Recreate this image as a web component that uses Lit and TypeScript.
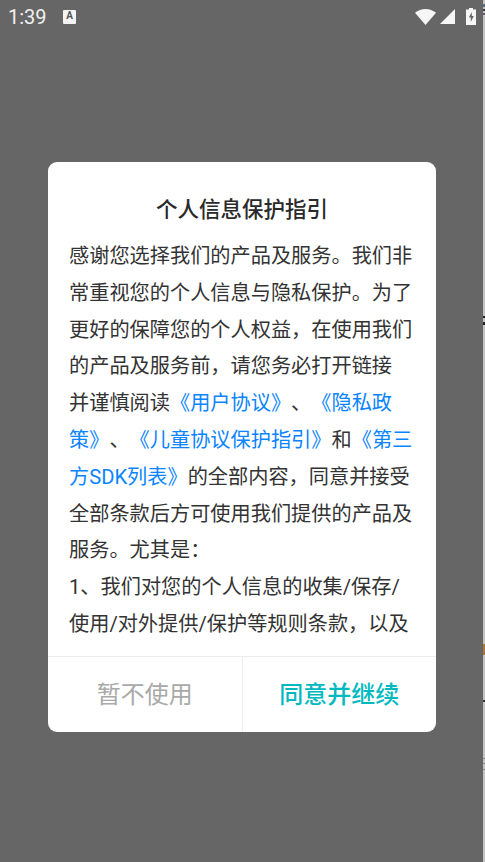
import { LitElement, html, css } from "lit";
import { customElement } from "lit/decorators.js";

const MARKS = [
  { top: 4, h: 3, c: "#5a6a80" },
  { top: 9, h: 2, c: "#3a3a3a" },
  { top: 13, h: 2, c: "#6a5a70" },
  { top: 316, h: 2, c: "#222222" },
  { top: 322, h: 3, c: "#222222" },
  { top: 644, h: 11, c: "#a87838" },
  { top: 700, h: 2, c: "#333333" },
  { top: 758, h: 1, c: "#8a8a8a" },
  { top: 763, h: 1, c: "#8a8a8a" },
  { top: 769, h: 1, c: "#8a8a8a" },
];

@customElement("app-root")
export class AppRoot extends LitElement {
  static styles = css`
    :host { display: block; width: 485px; height: 862px; background: #666666; font-family: "Roboto", "Noto Sans CJK SC", sans-serif; overflow: hidden; position: relative; text-spacing-trim: space-all; }
    .status { height: 33px; display: flex; align-items: center; padding: 0 9px 0 8px; color: #f0f0f0; font-size: 20px; }
    .time { width: 44px; }
    .a { width: 13px; height: 14px; margin-left: 11px; background: #f4f4f4; color: #555; font-size: 10px; font-weight: 700; display: flex; justify-content: center; line-height: 12px; border-radius: 1px; }
    .right { margin-left: auto; display: flex; align-items: center; gap: 4px; }
    .right svg { display: block; }
    .batt { margin-left: 7px; }
    .main { display: flex; padding: 129px 0 0 48px; }
    .dialog { width: 388px; height: 570px; background: #fff; border-radius: 9px; display: flex; flex-direction: column; overflow: hidden; }
    h1 { margin: 0; padding-top: 33px; height: 30px; text-align: center; font: 500 21.5px/30px "Roboto", "Noto Sans CJK SC", sans-serif; color: #2a2a2a; }
    .body { flex: 1; padding: 13px 21px 0 21px; font: 400 20.2px/36.8px "Roboto", "Noto Sans CJK SC", sans-serif; color: #333; overflow: hidden; white-space: nowrap; }
    a { color: #0a84ff; text-decoration: none; }
    .actions { height: 75px; border-top: 1px solid #ececec; display: flex; font: 400 24px/77px "Roboto", "Noto Sans CJK SC", sans-serif; }
    .actions div { flex: 1; text-align: center; }
    .no { color: #a9a9a9; border-right: 1px solid #ececec; }
    .yes { color: #00b9c0; font-weight: 500; }
    .edge { position: absolute; top: 0; right: 0; bottom: 0; width: 2px; background: #c4c4c4; }
    .mark { position: absolute; left: 0; width: 2px; }
  `;
  render() {
    return html`
      <div class="status">
        <span class="time">1:39</span>
        <span class="a">A</span>
        <div class="right">
          <svg width="21" height="16" viewBox="0 0 21 16"><path d="M0 3.800C3 1.300 6.600 0 10.500 0S18 1.300 21 3.800L10.500 16z" fill="#f6f6f6"/></svg>
          <svg width="15" height="15" viewBox="0 0 15 15"><path d="M15 0v15H0z" fill="#f6f6f6"/></svg>
          <svg class="batt" width="10" height="17" viewBox="0 0 10 17"><path fill-rule="evenodd" d="M3 0h4v1.500h3V17H0V1.500h3zM5.800 4L2.800 9.500h2V14l3-6h-2z" fill="#f6f6f6"/></svg>
        </div>
      </div>
      <div class="main">
        <div class="dialog">
          <h1>个人信息保护指引</h1>
          <div class="body">
            感谢您选择我们的产品及服务。我们非<br>
            常重视您的个人信息与隐私保护。为了<br>
            更好的保障您的个人权益，在使用我们<br>
            的产品及服务前，请您务必打开链接<br>
            并谨慎阅读<a>《用户协议》</a>、<a>《隐私政</a><br>
            <a>策》</a>、<a>《儿童协议保护指引》</a>和<a>《第三</a><br>
            <a>方SDK列表》</a>的全部内容，同意并接受<br>
            全部条款后方可使用我们提供的产品及<br>
            服务。尤其是：<br>
            1、我们对您的个人信息的收集/保存/<br>
            使用/对外提供/保护等规则条款，以及
          </div>
          <div class="actions"><div class="no">暂不使用</div><div class="yes">同意并继续</div></div>
        </div>
      </div>
      <div class="edge">
        ${MARKS.map(
          (m) => html`<div class="mark" style="top:${m.top}px;height:${m.h}px;background:${m.c}"></div>`
        )}
      </div>
    `;
  }
}
